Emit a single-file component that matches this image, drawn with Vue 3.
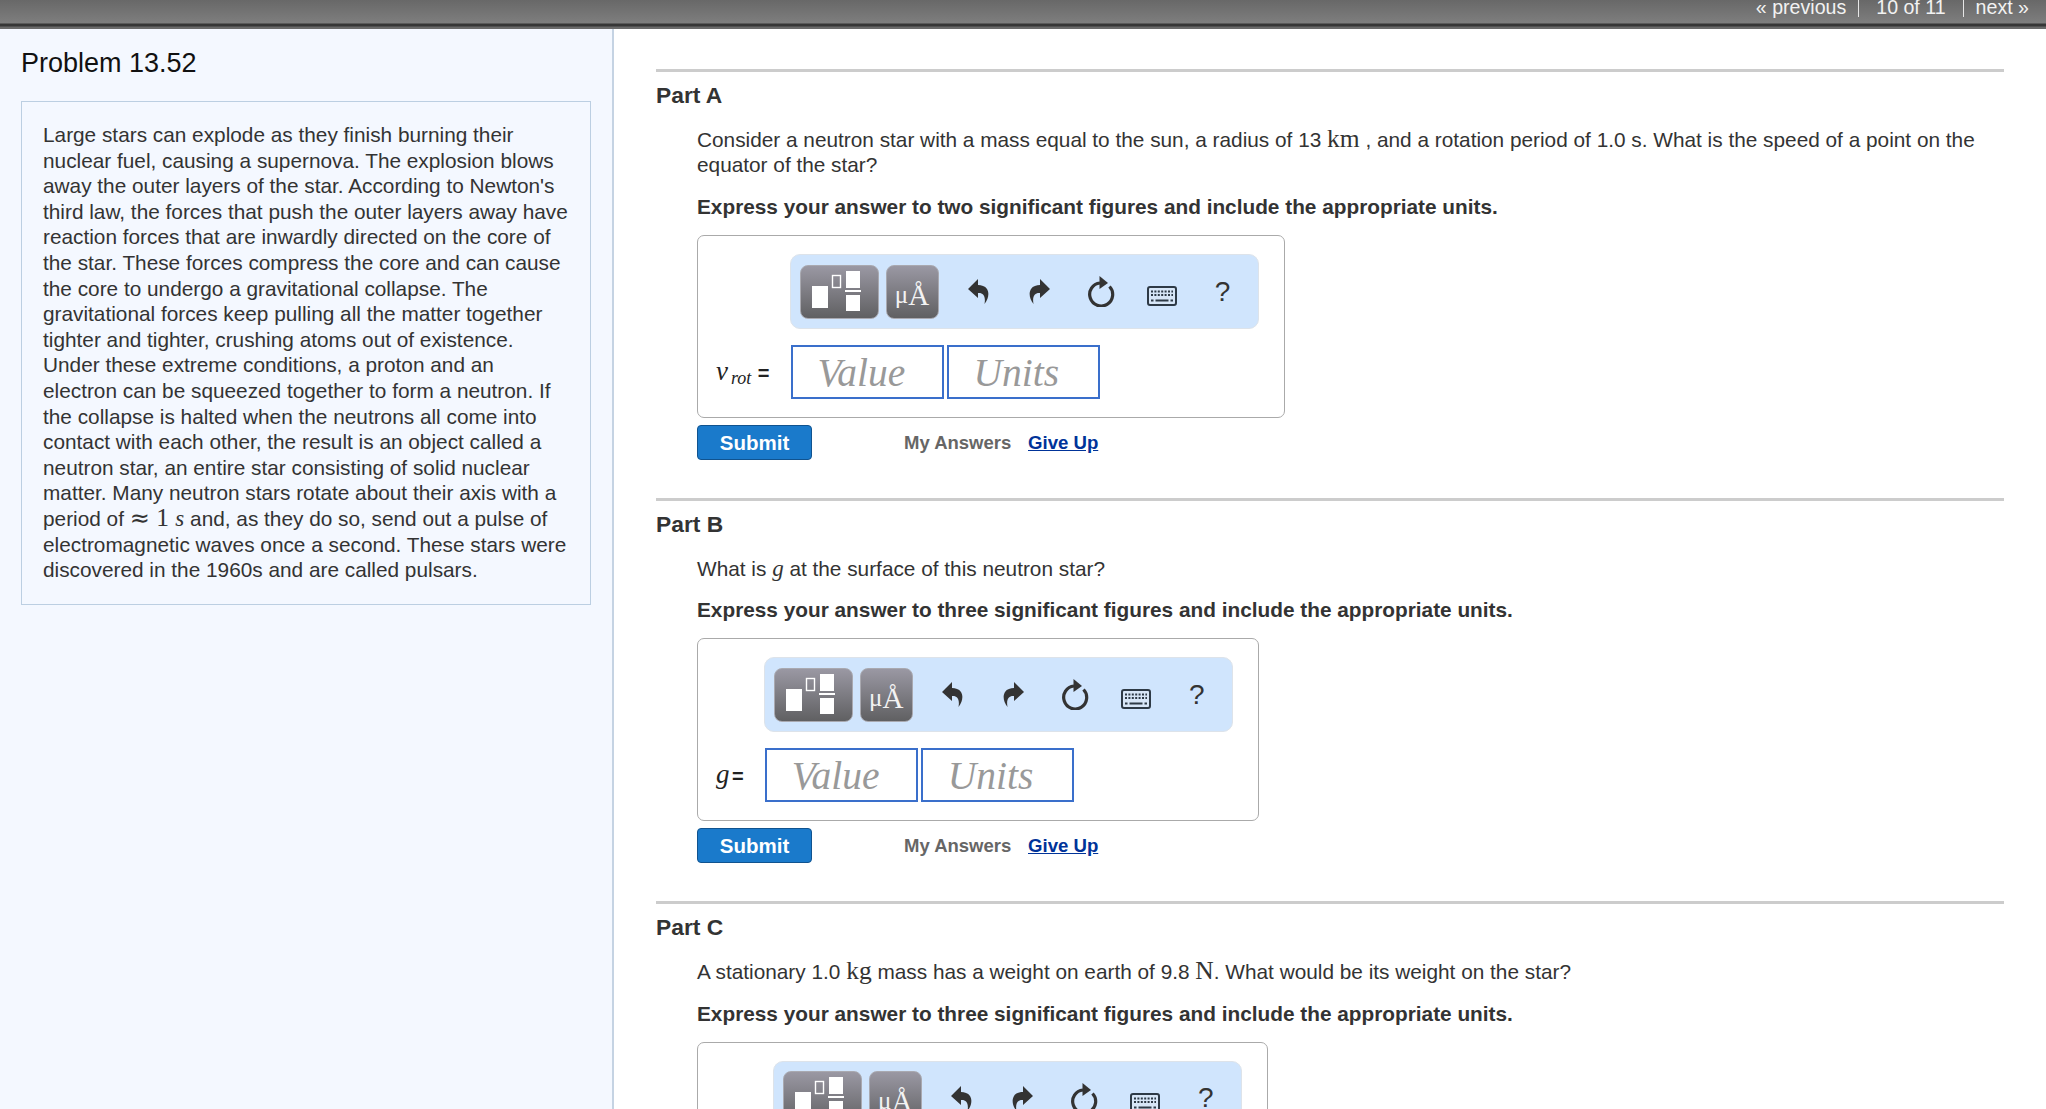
<script setup>
const parts = [
  {
    name: 'Part A',
    segments: [
      { text: 'Consider a neutron star with a mass equal to the sun, a radius of 13 ' },
      { math: 'km' },
      { text: ' , and a rotation period of 1.0 s. What is the speed of a point on the equator of the star?' }
    ],
    instruction: 'Express your answer to two significant figures and include the appropriate units.',
    symbol: 'v',
    sub: 'rot'
  },
  {
    name: 'Part B',
    segments: [
      { text: 'What is ' },
      { italic: 'g' },
      { text: ' at the surface of this neutron star?' }
    ],
    instruction: 'Express your answer to three significant figures and include the appropriate units.',
    symbol: 'g',
    sub: ''
  },
  {
    name: 'Part C',
    segments: [
      { text: 'A stationary 1.0 ' },
      { math: 'kg' },
      { text: ' mass has a weight on earth of 9.8 ' },
      { math: 'N' },
      { text: '. What would be its weight on the star?' }
    ],
    instruction: 'Express your answer to three significant figures and include the appropriate units.',
    symbol: 'W',
    sub: ''
  }
]
</script>

<template>
  <div class="page">
    <header class="topbar">
      <nav class="pager">
        <span class="pager-item">« previous</span>
        <span class="pager-item sep">10 of 11</span>
        <span class="pager-item sep">next »</span>
      </nav>
    </header>
    <div class="columns">
      <aside class="sidebar">
        <h1 class="title">Problem 13.52</h1>
        <div class="intro">
          Large stars can explode as they finish burning their nuclear fuel, causing a supernova. The explosion blows away the outer layers of the star. According to Newton's third law, the forces that push the outer layers away have reaction forces that are inwardly directed on the core of the star. These forces compress the core and can cause the core to undergo a gravitational collapse. The gravitational forces keep pulling all the matter together tighter and tighter, crushing atoms out of existence. Under these extreme conditions, a proton and an electron can be squeezed together to form a neutron. If the collapse is halted when the neutrons all come into contact with each other, the result is an object called a neutron star, an entire star consisting of solid nuclear matter. Many neutron stars rotate about their axis with a period of <span class="math"><span class="approx">≈</span> 1 <i class="small-var">s</i></span> and, as they do so, send out a pulse of electromagnetic waves once a second. These stars were discovered in the 1960s and are called pulsars.
        </div>
      </aside>
      <main class="content">
        <section v-for="part in parts" :key="part.name" class="part">
          <h2 class="part-name">{{ part.name }}</h2>
          <p class="question">
            <template v-for="(seg, i) in part.segments" :key="i">
              <span v-if="seg.math" class="math">{{ seg.math }}</span>
              <i v-else-if="seg.italic" class="math small-var">{{ seg.italic }}</i>
              <template v-else>{{ seg.text }}</template>
            </template>
          </p>
          <p class="instruction">{{ part.instruction }}</p>
          <div class="answer">
            <div class="toolbar">
              <button class="tool tool-wide" type="button" aria-label="Templates">
                <svg width="77" height="52" viewBox="0 0 77 52">
                  <rect x="11" y="20" width="16" height="22" fill="#fff" />
                  <rect x="31.5" y="9.5" width="8" height="12" fill="none" stroke="#fff" stroke-width="1.4" />
                  <rect x="45" y="5" width="14" height="17" fill="#fff" />
                  <rect x="44" y="24" width="16" height="2" fill="#fff" />
                  <rect x="45" y="29" width="14" height="16" fill="#fff" />
                </svg>
              </button>
              <button class="tool tool-units" type="button"><span class="mu">μ</span><span class="angstrom">Å</span></button>
              <span class="icon-cell">
                <svg width="21" height="25" viewBox="0 0 21 25"><path d="M10 0 L0 10 L10 19 V14 C15 13.5 18 17 16.5 25 C20.5 20 21.5 14 19 10 C17 7 13.5 6 10 6 Z" fill="#333" /></svg>
              </span>
              <span class="icon-cell">
                <svg width="21" height="25" viewBox="0 0 21 25"><path d="M11 0 L21 10 L11 19 V14 C6 13.5 3 17 4.5 25 C0.5 20 -0.5 14 2 10 C4 7 7.5 6 11 6 Z" fill="#333" /></svg>
              </span>
              <span class="icon-cell">
                <svg width="28" height="31" viewBox="0 0 28 31">
                  <path d="M22.5 10.5 A11.5 11.5 0 1 1 13 7" fill="none" stroke="#333" stroke-width="3.2" />
                  <path d="M12.5 0 L21 7 L12.5 13 Z" fill="#333" />
                </svg>
              </span>
              <span class="icon-cell icon-keyboard">
                <svg width="30" height="20" viewBox="0 0 30 20">
                  <rect x="1" y="1" width="28" height="18" rx="2" fill="#d7e6f7" stroke="#2e3a46" stroke-width="2" />
                  <path d="M4 5.5 H26 M4 9 H26" stroke="#2e3a46" stroke-width="2" stroke-dasharray="2 1.4" fill="none" />
                  <path d="M4 14.5 H6.5 M8.5 14.5 H21.5 M23.5 14.5 H26" stroke="#2e3a46" stroke-width="2" fill="none" />
                </svg>
              </span>
              <span class="icon-cell help">?</span>
            </div>
            <label class="symbol"><i>{{ part.symbol }}</i><sub v-if="part.sub">{{ part.sub }}</sub><span class="eq">=</span></label>
            <div class="fields">
              <input class="field" type="text" placeholder="Value" />
              <input class="field" type="text" placeholder="Units" />
            </div>
          </div>
          <div class="actions">
            <button class="submit" type="button">Submit</button>
            <span class="my-answers">My Answers</span>
            <a class="give-up" href="#">Give Up</a>
          </div>
        </section>
      </main>
    </div>
  </div>
</template>

<style scoped>
.page {
  height: 1109px;
  overflow: hidden;
  display: flex;
  flex-direction: column;
  font-family: "Liberation Sans", Arial, sans-serif;
  font-size: 20.8px;
  line-height: 25.6px;
  color: #333;
  background: #fff;
}
.topbar {
  flex: none;
  height: 29px;
  background: linear-gradient(#686868 0, #7e7e7e 23px, #363636 24px, #363636 26px, #6a6a6a 27px, #6a6a6a 29px);
  display: flex;
  justify-content: flex-end;
  overflow: hidden;
}
.pager {
  display: flex;
  align-items: flex-start;
  color: #f2f2f2;
  font-size: 19.6px;
  line-height: 14px;
  padding-right: 17px;
}
.pager-item {
  display: block;
  height: 17px;
  padding: 0 12px 0 0;
}
.pager-item.sep {
  border-left: 1px solid #e6e6e6;
  padding-left: 17px;
  padding-right: 17px;
}
.pager-item:last-child {
  padding-left: 12px;
  padding-right: 0;
}
.columns {
  flex: 1;
  display: flex;
  min-height: 0;
}
.sidebar {
  flex: none;
  width: 570px;
  background: #f4f8ff;
  border-right: 2px solid #c5d3e3;
  padding: 18px 21px 0;
}
.title {
  margin: 0 0 22px;
  font-size: 27px;
  line-height: 32px;
  font-weight: 400;
  color: #111;
}
.intro {
  border: 1px solid #bccfe2;
  padding: 20px 18px 21px 21px;
}
.math {
  font-family: "Liberation Serif", "Times New Roman", serif;
  font-size: 25.5px;
  line-height: 0;
}
.approx {
  font-family: "DejaVu Sans", sans-serif;
  font-size: 24px;
}
.small-var {
  font-size: 23px;
}
.content {
  flex: 1;
  min-width: 0;
  padding: 40px 42px 0;
}
.part {
  border-top: 3px solid #ccc;
  padding: 11px 0 37.9px;
}
.part-name {
  margin: 0;
  font-size: 22.8px;
  line-height: 25.6px;
  font-weight: 700;
}
.question {
  margin: 18px 0 0 41px;
}
.instruction {
  margin: 16px 0 0 41px;
  font-weight: 700;
}
.answer {
  margin: 15.7px 0 0 41px;
  width: fit-content;
  box-sizing: border-box;
  border: 1px solid #aaa;
  border-radius: 7px;
  padding: 18px 25px 18px 18px;
  display: grid;
  grid-template-columns: auto auto;
  column-gap: 20px;
  row-gap: 16px;
  align-items: center;
}
.toolbar {
  grid-column: 2;
  width: 469px;
  height: 75px;
  box-sizing: border-box;
  background: #d0e5fd;
  border: 1px solid #dde3ea;
  border-radius: 10px;
  padding-left: 9px;
  display: flex;
  align-items: center;
}
.tool {
  height: 54px;
  box-sizing: border-box;
  padding: 0;
  border: 1px solid #a9a9b0;
  border-radius: 8px;
  background: linear-gradient(#9a98a3, #606062);
  color: #f3f3f3;
  display: flex;
  align-items: center;
  justify-content: center;
}
.tool svg {
  display: block;
}
.tool-wide {
  width: 79px;
}
.tool-units {
  width: 53px;
  margin: 0 9.5px 0 7px;
  font-family: "Liberation Serif", "Times New Roman", serif;
  padding-top: 6px;
}
.mu {
  font-size: 25px;
  line-height: 28px;
}
.angstrom {
  font-size: 29px;
  line-height: 28px;
}
.icon-cell {
  width: 61px;
  flex: none;
  display: flex;
  justify-content: center;
  align-items: center;
}
.icon-keyboard {
  padding-top: 9px;
}
.help {
  font-size: 28px;
  color: #333;
  line-height: 30px;
}
.symbol {
  grid-column: 1;
  font-family: "Liberation Serif", "Times New Roman", serif;
  font-size: 27px;
  line-height: 30px;
  color: #222;
  white-space: nowrap;
}
.symbol sub {
  font-size: 18px;
  font-style: italic;
  line-height: 0;
  margin-left: 3px;
  vertical-align: -4px;
}
.eq {
  font-family: "Liberation Sans", Arial, sans-serif;
  font-size: 20px;
  font-weight: 700;
  margin-left: 2.5px;
}
.symbol sub + .eq {
  margin-left: 6.5px;
}
.fields {
  grid-column: 2;
  display: flex;
  gap: 3px;
  margin-left: 1px;
}
.field {
  width: 153px;
  height: 54px;
  box-sizing: border-box;
  border: 2px solid #3a6fcb;
  padding: 2px 0 0 25px;
  background: #fff;
  font-family: "Liberation Serif", "Times New Roman", serif;
  font-style: italic;
  font-size: 39.5px;
  color: #333;
  outline: none;
  border-radius: 0;
}
.field::placeholder {
  color: #999;
  opacity: 1;
}
.actions {
  margin: 7px 0 0 41px;
  display: flex;
  align-items: center;
}
.submit {
  width: 115px;
  height: 35px;
  box-sizing: border-box;
  padding: 0;
  background: #1a7acb;
  border: 1px solid #10538f;
  border-radius: 4px;
  color: #fff;
  font-family: "Liberation Sans", Arial, sans-serif;
  font-weight: 700;
  font-size: 20.5px;
}
.my-answers {
  margin-left: 92px;
  width: 124px;
  font-size: 18.5px;
  font-weight: 700;
  color: #666;
}
.give-up {
  font-size: 18.6px;
  font-weight: 700;
  color: #003399;
  text-decoration: underline;
}
</style>
<style>
html, body { margin: 0; overflow: hidden; background: #fff; }
</style>
